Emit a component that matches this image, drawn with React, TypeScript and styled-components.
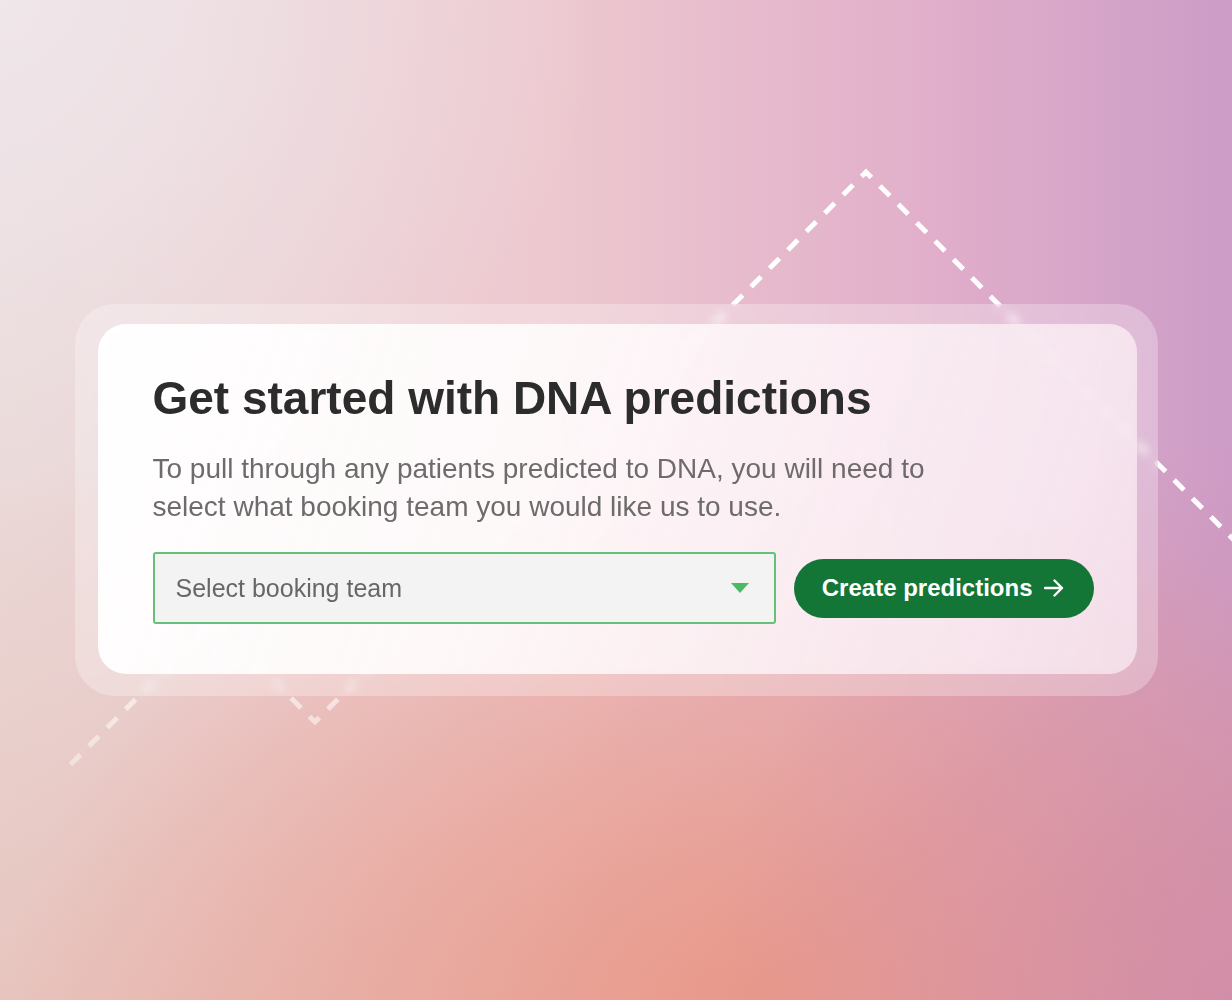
import styled, { createGlobalStyle } from "styled-components";

const GlobalStyle = createGlobalStyle`
    html, body {
        margin: 0;
        padding: 0;
    }
    body {
        font-family: "Liberation Sans", Arial, sans-serif;
    }
`;

export default function App() {
    return (
        <>
            <GlobalStyle />
            <Page>
                <Zigzag viewBox="0 0 1232 1000" width="1232" height="1000">
                    <defs>
                        <linearGradient id="fade" gradientUnits="userSpaceOnUse" x1="0" y1="520" x2="0" y2="790">
                            <stop offset="0" stopColor="#fff" stopOpacity="1" />
                            <stop offset="1" stopColor="#fff" stopOpacity="0.35" />
                        </linearGradient>
                    </defs>
                    <path
                        d="M62 773 L214 621 L315 722 L866 172 L1260 566"
                        fill="none"
                        stroke="url(#fade)"
                        strokeWidth="5"
                        strokeDasharray="14 12"
                        strokeDashoffset="14"
                    />
                </Zigzag>
                <Frame>
                    <Card>
                        <Title>Get started with DNA predictions</Title>
                        <Lead>
                            To pull through any patients predicted to DNA, you will need to
                            <br />
                            select what booking team you would like us to use.
                        </Lead>
                        <Row>
                            <Select>
                                <Placeholder>Select booking team</Placeholder>
                                <Caret viewBox="0 0 18 10" width="18" height="10">
                                    <path d="M0 0 H18 L9 10 Z" fill="#4cba63" />
                                </Caret>
                            </Select>
                            <Button type="button">
                                Create predictions
                                <svg viewBox="0 0 20 20" width="20" height="20">
                                    <path
                                        d="M1 10 H18 M10.5 2.5 L18 10 L10.5 17.5"
                                        fill="none"
                                        stroke="#fff"
                                        strokeWidth="2.4"
                                        strokeLinecap="round"
                                        strokeLinejoin="round"
                                    />
                                </svg>
                            </Button>
                        </Row>
                    </Card>
                </Frame>
            </Page>
        </>
    );
}

const Page = styled.div`
    position: relative;
    width: 100%;
    height: 1000px;
    overflow: hidden;
    display: flex;
    align-items: center;
    justify-content: center;
    background:
        radial-gradient(ellipse 600px 520px at 0% 0%, rgba(240, 232, 237, 0.9), rgba(240, 232, 237, 0) 100%),
        radial-gradient(ellipse 520px 560px at 100% 100%, rgba(204, 134, 170, 0.65), rgba(204, 134, 170, 0) 100%),
        radial-gradient(ellipse 760px 520px at 62% 100%, rgba(233, 150, 132, 0.9), rgba(233, 150, 132, 0) 100%),
        linear-gradient(180deg, rgba(230, 170, 150, 0) 45%, rgba(226, 165, 150, 0.4) 100%),
        linear-gradient(90deg, #eadad9 0%, #edc8cf 45%, #e1afca 75%, #cd9cc7 100%);
`;

const Zigzag = styled.svg`
    position: absolute;
    left: 0;
    top: 0;
`;

const Frame = styled.div`
    position: relative;
    z-index: 1;
    padding: 20px 21px 22px 23px;
    border-radius: 40px;
    background: rgba(255, 255, 255, 0.28);
    backdrop-filter: blur(5px);
`;

const Card = styled.div`
    width: 1039px;
    box-sizing: border-box;
    padding: 47px 43px 50px 55px;
    border-radius: 28px;
    background: linear-gradient(110deg, rgba(255, 255, 255, 0.96) 0%, rgba(255, 251, 251, 0.88) 40%, rgba(247, 228, 238, 0.76) 100%);
    backdrop-filter: blur(4px);
`;

const Title = styled.h1`
    margin: 0;
    font-size: 46px;
    line-height: 55px;
    font-weight: 700;
    color: #2c2c2c;
`;

const Lead = styled.p`
    margin: 24px 0 0;
    font-size: 28px;
    line-height: 38px;
    color: #6e6b6c;
`;

const Row = styled.div`
    display: flex;
    align-items: center;
    gap: 18px;
    margin-top: 26px;
`;

const Select = styled.div`
    flex: 1;
    height: 72px;
    box-sizing: border-box;
    display: flex;
    align-items: center;
    justify-content: space-between;
    padding: 0 25px 0 21px;
    background: #f4f3f3;
    border: 2px solid #66c079;
    border-radius: 3px;
`;

const Placeholder = styled.span`
    font-size: 25px;
    color: #676767;
`;

const Caret = styled.svg`
    display: block;
`;

const Button = styled.button`
    height: 59px;
    display: flex;
    align-items: center;
    gap: 11px;
    padding: 0 30px 0 28px;
    border: none;
    border-radius: 30px;
    background: #137636;
    color: #fff;
    font-family: "Liberation Sans", Arial, sans-serif;
    font-size: 24px;
    font-weight: 700;
    cursor: pointer;
`;
